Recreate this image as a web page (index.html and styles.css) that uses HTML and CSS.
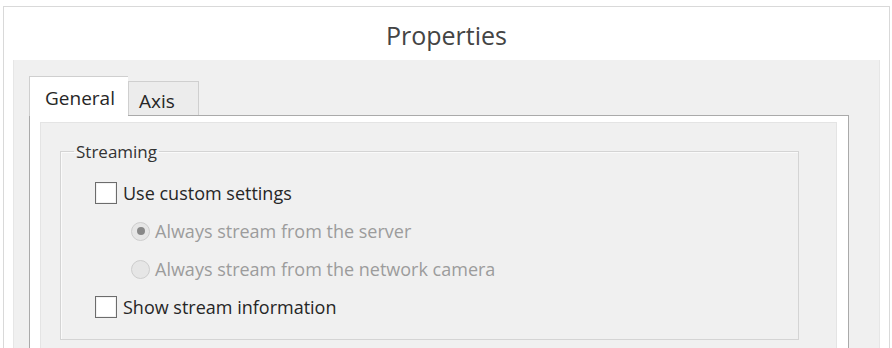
FILE: index.html
```html
<!DOCTYPE html>
<html lang="en">
<head>
    <meta charset="UTF-8">
    <meta name="viewport" content="width=device-width, initial-scale=1.0">
    <title>Properties</title>
    <link rel="stylesheet" href="styles.css">
</head>
<body>
    <div class="dialog">
        <div class="title">Properties</div>
        <div class="panel">
            <div class="tabs">
                <div class="tab active">General</div>
                <div class="tab">Axis</div>
            </div>
            <div class="page">
                <div class="page-inner">
                    <fieldset class="group">
                        <legend>Streaming</legend>
                        <div class="row">
                            <span class="check"></span>
                            <span class="label">Use custom settings</span>
                        </div>
                        <div class="row sub disabled">
                            <span class="radio checked"></span>
                            <span class="label">Always stream from the server</span>
                        </div>
                        <div class="row sub disabled">
                            <span class="radio"></span>
                            <span class="label">Always stream from the network camera</span>
                        </div>
                        <div class="row">
                            <span class="check"></span>
                            <span class="label">Show stream information</span>
                        </div>
                    </fieldset>
                </div>
            </div>
        </div>
    </div>
</body>
</html>
```

FILE: styles.css
```css
body {
    margin: 0;
    background-color: #fff;
    font-family: "Open Sans", "Noto Sans", sans-serif;
    color: #262626;
    height: 348px;
    overflow: hidden;
}
.dialog {
    margin: 6px 2px 0 3px;
    border: 1px solid #d9d9d9;
    border-bottom: none;
    height: 342px;
    overflow: hidden;
}
.title {
    height: 53px;
    line-height: 56px;
    text-align: center;
    font-size: 25px;
    color: #444;
}
.panel {
    margin: 0 9px;
    background-color: #f0f0f0;
    border-left: 1px solid #e6e6e6;
    border-right: 1px solid #e6e6e6;
    padding: 16px 30px 0 15px;
    height: 400px;
}
.tabs {
    display: flex;
    align-items: flex-end;
    height: 39px;
    position: relative;
    z-index: 1;
}
.tab {
    border: 1px solid #cfcfcf;
    border-bottom: none;
    background-color: #ececec;
    font-size: 19px;
    height: 33px;
    line-height: 38px;
    padding: 0 23px 0 10px;
}
.tab.active {
    background-color: #fff;
    height: 39px;
    line-height: 42px;
    padding: 0 13px 0 15px;
    margin-bottom: -1px;
    border-right: none;
}
.page {
    background-color: #fff;
    border: 1px solid #aaa;
    border-bottom: none;
    padding: 6px 11px 0 10px;
    height: 400px;
}
.page-inner {
    background-color: #f0f0f0;
    border: 1px solid #e4e4e4;
    border-bottom: none;
    padding: 17px 37px 0 19px;
    height: 400px;
}
.group {
    margin: 0;
    border: 1px solid #d4d4d4;
    box-shadow: inset 1px 1px 0 #fafafa;
    padding: 11px 0 13px 13px;
}
.group legend {
    font-size: 17px;
    line-height: 23px;
    padding: 0 2px;
    color: #333;
}
.row {
    display: flex;
    align-items: center;
    height: 38px;
    padding-left: 21px;
}
.row.sub {
    padding-left: 57px;
}
.label {
    font-size: 18px;
    margin-left: 6px;
}
.sub .label {
    margin-left: 5px;
}
.disabled .label {
    color: #9c9c9c;
}
.check {
    width: 20px;
    height: 20px;
    border: 1px solid #6c6c6c;
    background-color: #fff;
    box-shadow: inset 0 0 0 1px #f2f2f2;
}
.radio {
    width: 17px;
    height: 17px;
    border: 1px solid #cdcdcd;
    border-radius: 50%;
    background-color: #e6e6e6;
    display: flex;
    align-items: center;
    justify-content: center;
}
.radio.checked::after {
    content: "";
    width: 8px;
    height: 8px;
    border-radius: 50%;
    background-color: #888;
}
```
